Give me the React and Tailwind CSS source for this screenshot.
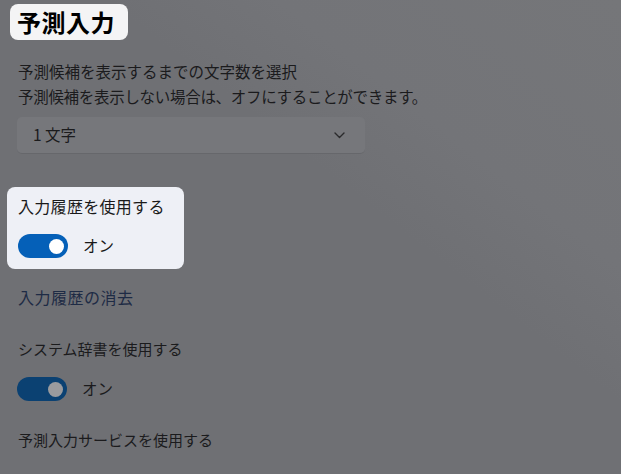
function Toggle({ dim }) {
  return (
    <div
      className={
        "flex h-6 w-[50px] items-center justify-end rounded-full pr-1 " +
        (dim ? "bg-[#0b4172]" : "bg-[#0560b8]")
      }
    >
      <span className={"h-[15px] w-[15px] rounded-full " + (dim ? "bg-[#9a9b9e]" : "bg-white")} />
    </div>
  );
}

export default function App() {
  return (
    <div
      className="h-[474px] w-[621px] overflow-hidden bg-[linear-gradient(218deg,#757679_0%,#737478_28%,#6f7074_42%,#6f7074_100%)] text-[#1b1b1d]"
      style={{ fontFamily: '"Noto Sans CJK JP", "Noto Sans", sans-serif' }}
    >
      <div className="flex flex-col pt-1">
        <div className="ml-[10px] w-fit rounded-lg bg-[#f4f4f5] pl-[7px] pr-[13px] py-[3px] text-[24px] font-bold leading-[30px] tracking-[0.5px] text-black">
          予測入力
        </div>

        <div className="ml-[18px] mt-[19px] text-[15.5px] leading-[25px]">
          <p>予測候補を表示するまでの文字数を選択</p>
          <p className="tracking-[-0.3px]">予測候補を表示しない場合は、オフにすることができます。</p>
        </div>

        <div className="ml-[17px] mt-2 flex h-[37px] w-[348px] items-center justify-between rounded-[5px] border-b border-[#66676b] bg-[#76777b] pl-4 pr-[20px] text-[15.5px]">
          <span>1 文字</span>
          <svg width="11" height="7" viewBox="0 0 11 7" fill="none">
            <path d="M1 1l4.5 4.5L10 1" stroke="#2a2a2c" strokeWidth="1.4" strokeLinecap="round" strokeLinejoin="round" />
          </svg>
        </div>

        <div className="ml-[7px] mt-[33px] w-[177px] rounded-lg bg-[#eef0f6] pb-[11px] pl-[11px] pt-[7px]">
          <p className="text-[16px] leading-6 tracking-[0.3px] text-[#1a1a1a]">入力履歴を使用する</p>
          <div className="mt-4 flex items-center gap-[15px]">
            <Toggle />
            <span className="text-[15.5px] text-[#1a1a1a]">オン</span>
          </div>
        </div>

        <p className="ml-[18px] mt-4 text-[16px] leading-6 tracking-[0.5px] text-[#1e2b45]">入力履歴の消去</p>

        <p className="ml-[18px] mt-7 text-[15px] leading-6">システム辞書を使用する</p>
        <div className="ml-[17px] mt-4 flex items-center gap-[15px]">
          <Toggle dim />
          <span className="text-[15.5px]">オン</span>
        </div>

        <p className="ml-[18px] mt-[27px] text-[15px] leading-6">予測入力サービスを使用する</p>
      </div>
    </div>
  );
}
